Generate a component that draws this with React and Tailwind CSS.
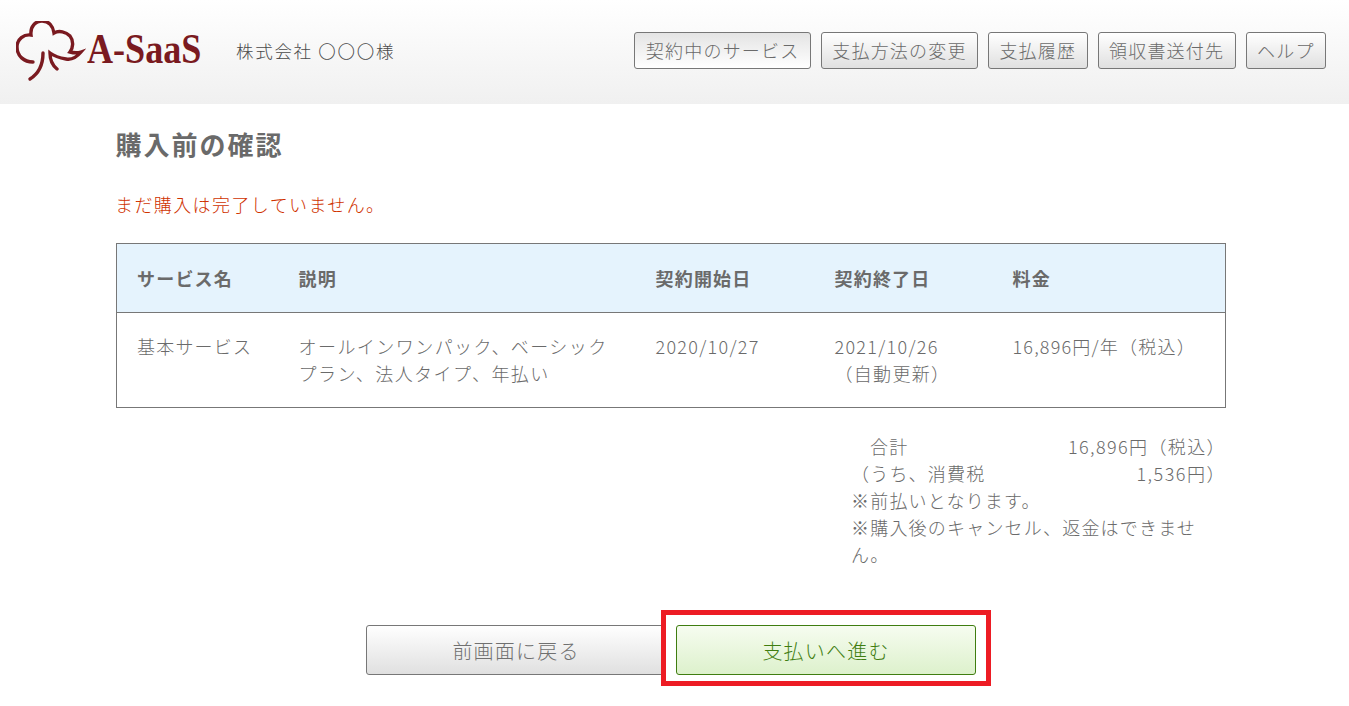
const navItems = [
  { label: "契約中のサービス", active: true },
  { label: "支払方法の変更" },
  { label: "支払履歴" },
  { label: "領収書送付先" },
  { label: "ヘルプ" },
];

function TreeLogo() {
  return (
    <svg width="70" height="62" viewBox="16 21 70 62" fill="none" stroke="#7a1a20" strokeWidth="3.4" strokeLinecap="round" className="mt-[4px] shrink-0">
      <path d="M30 79C38 74 43 65 43 53" />
      <path d="M33 62C24 62 17 56 17 47C17 39 24 34 31 35C30 26 36 21 42 21C49 21 53 26 54 33C59 30 66 32 70 36C74 41 73 48 70 52C74 53 78 53 81 52C76 58 71 60 66 59C60 58 54 56 50 53C50 60 52 65 57 69" />
    </svg>
  );
}

export default function App() {
  return (
    <div className="min-h-[706px] bg-white font-['Noto_Sans_CJK_JP','Noto_Sans',sans-serif] text-[18px] font-light leading-[27px] tracking-[1.2px] text-[#6a6a6a]">
      <header className="flex h-[104px] items-center bg-gradient-to-b from-white to-[#f0f0f0] pb-[4px] pl-[16px] pr-[23px]">
        <TreeLogo />
        <span className="-mt-[3px] ml-px w-[149px] origin-left scale-x-[0.84] font-['Liberation_Serif',serif] text-[43px] font-bold leading-none tracking-normal text-[#7a1a20]">A-SaaS</span>
        <span className="text-[17.5px] tracking-[1.7px] text-[#4a4a4a]">株式会社 〇〇〇様</span>
        <nav className="ml-auto flex gap-[10px]">
          {navItems.map((item) => (
            <a
              key={item.label}
              className={`flex h-[37px] items-center rounded-[3px] border border-[#777] px-[10.4px] ${
                item.active ? "bg-gradient-to-b from-[#e4e4e4] to-white" : "bg-gradient-to-b from-white to-[#e0e0e0]"
              }`}
            >
              {item.label}
            </a>
          ))}
        </nav>
      </header>

      <main className="ml-[116px] w-[1110px]">
        <h1 className="-ml-[0.5px] mt-[20px] text-[26px] font-bold leading-[40px] tracking-[2px]">購入前の確認</h1>
        <p className="-ml-px mt-[27px] tracking-[1.4px] text-[#cf3200]">まだ購入は完了していません。</p>

        <table className="mt-[25px] w-full table-fixed border-collapse border border-[#777]">
          <thead>
            <tr className="h-[69px] border-b border-[#777] bg-[#e5f3fd] text-left">
              <th className="w-[162px] pl-[20px] font-bold">サービス名</th>
              <th className="w-[357px] pl-[20px] font-bold">説明</th>
              <th className="w-[179px] pl-[20px] font-bold">契約開始日</th>
              <th className="w-[178px] pl-[20px] font-bold">契約終了日</th>
              <th className="pl-[20px] font-bold">料金</th>
            </tr>
          </thead>
          <tbody>
            <tr className="h-[95px] align-top">
              <td className="pl-[20px] pt-[20px]">基本サービス</td>
              <td className="pl-[20px] pr-[20px] pt-[20px] tracking-[1.45px]">オールインワンパック、ベーシックプラン、法人タイプ、年払い</td>
              <td className="pl-[20px] pt-[20px] tracking-[1.3px]">2020/10/27</td>
              <td className="pl-[20px] pt-[20px] tracking-[1.3px]">2021/10/26<br />（自動更新）</td>
              <td className="pl-[20px] pt-[20px] tracking-[1.2px]">16,896円/年（税込）</td>
            </tr>
          </tbody>
        </table>

        <div className="ml-[735px] mt-[25px] w-[375px]">
          <div className="flex justify-between pl-[19px]"><span>合計</span><span className="tracking-[1.4px]">16,896円（税込）</span></div>
          <div className="flex justify-between"><span>（うち、消費税</span><span className="tracking-[1.5px]">1,536円）</span></div>
          <p className="w-[355px]">※前払いとなります。</p>
          <p className="w-[355px]">※購入後のキャンセル、返金はできません。</p>
        </div>

        <div className="ml-[250px] mt-[57px] flex gap-[10px] text-[20px]">
          <button className="h-[50px] w-[300px] rounded-[3px] border border-[#777] bg-gradient-to-b from-white to-[#e0e0e0] text-[#707070]">前画面に戻る</button>
          <button className="relative h-[50px] w-[300px] rounded-[3px] border border-[#3f7d10] bg-gradient-to-b from-[#f6fcf0] to-[#ddf1cc] text-[#3f7d10]">
            支払いへ進む
            <span className="absolute -bottom-[12px] -left-[16px] -right-[16px] -top-[16px] border-[5px] border-[#ed1c24]"></span>
          </button>
        </div>
      </main>
    </div>
  );
}
